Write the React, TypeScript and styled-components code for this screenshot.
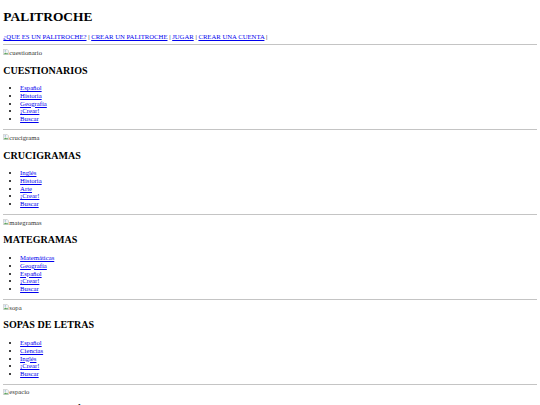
import React from "react";
import styled, { createGlobalStyle } from "styled-components";

interface Section {
  image: string;
  title: string;
  links: string[];
}

const sections: Section[] = [
  {
    image: "cuestionario",
    title: "CUESTIONARIOS",
    links: ["Español", "Historia", "Geografía", "¡Crear!", "Buscar"],
  },
  {
    image: "crucigrama",
    title: "CRUCIGRAMAS",
    links: ["Inglés", "Historia", "Arte", "¡Crear!", "Buscar"],
  },
  {
    image: "mategramas",
    title: "MATEGRAMAS",
    links: ["Matemáticas", "Geografía", "Español", "¡Crear!", "Buscar"],
  },
  {
    image: "sopa",
    title: "SOPAS DE LETRAS",
    links: ["Español", "Ciencias", "Inglés", "¡Crear!", "Buscar"],
  },
];

const menu = [
  "¿QUE ES UN PALITROCHE?",
  "CREAR UN PALITROCHE",
  "JUGAR",
  "CREAR UNA CUENTA",
];

const GlobalStyle = createGlobalStyle`
  html, body {
    background: #fff;
  }
  body {
    margin: 0 0.5em 0.5em;
    font-family: "Liberation Serif", "Times New Roman", serif;
    font-size: 6.7px;
    line-height: 1.14;
    color: #000;
  }
`;

const Page = styled.div`
  display: block;
`;

const Title = styled.h1`
  font-size: 2em;
  font-weight: bold;
  margin: 0.67em 0;
`;

const Menu = styled.div`
  margin: 0;
`;

const MenuLink = styled.a`
  color: #0000ee;
  text-decoration: underline;
  cursor: pointer;
`;

const Rule = styled.hr`
  margin: 0.5em 0;
  border: none;
  border-top: 1px solid #c4c4c4;
  height: 0;
`;

const Picture = styled.div`
  color: #333;

  svg {
    vertical-align: -0.5px;
  }
`;

const SectionTitle = styled.h2`
  font-size: 1.5em;
  font-weight: bold;
  margin: 0.83em 0;
`;

const List = styled.ul`
  margin: 1em 0;
  padding-left: 2.5em;
  list-style: disc;
`;

const Item = styled.li`
  display: list-item;
`;

const BrokenIcon = () => (
  <svg width="6" height="6" viewBox="0 0 16 16">
    <path d="M1 1h10l4 4v10H1z" fill="#f4f4f4" stroke="#9a9a9a" />
    <path d="M2 14l4-5 3 3 2-2 3 4z" fill="#5aa55a" />
    <circle cx="6" cy="5" r="1.6" fill="#6aa0d8" />
  </svg>
);

const Broken = ({ alt }: { alt: string }) => (
  <Picture>
    <BrokenIcon />
    {alt}
  </Picture>
);

export default function App() {
  return (
    <Page>
      <GlobalStyle />
      <Title>PALITROCHE</Title>
      <Menu>
        {menu.map((label) => (
          <React.Fragment key={label}>
            <MenuLink>{label}</MenuLink>
            {" | "}
          </React.Fragment>
        ))}
      </Menu>
      {sections.map((s) => (
        <React.Fragment key={s.title}>
          <Rule />
          <Broken alt={s.image} />
          <SectionTitle>{s.title}</SectionTitle>
          <List>
            {s.links.map((l, i) => (
              <Item key={i}>
                <MenuLink>{l}</MenuLink>
              </Item>
            ))}
          </List>
        </React.Fragment>
      ))}
      <Rule />
      <Broken alt="espacio" />
      <SectionTitle>PROGRAMACIÓN</SectionTitle>
    </Page>
  );
}
